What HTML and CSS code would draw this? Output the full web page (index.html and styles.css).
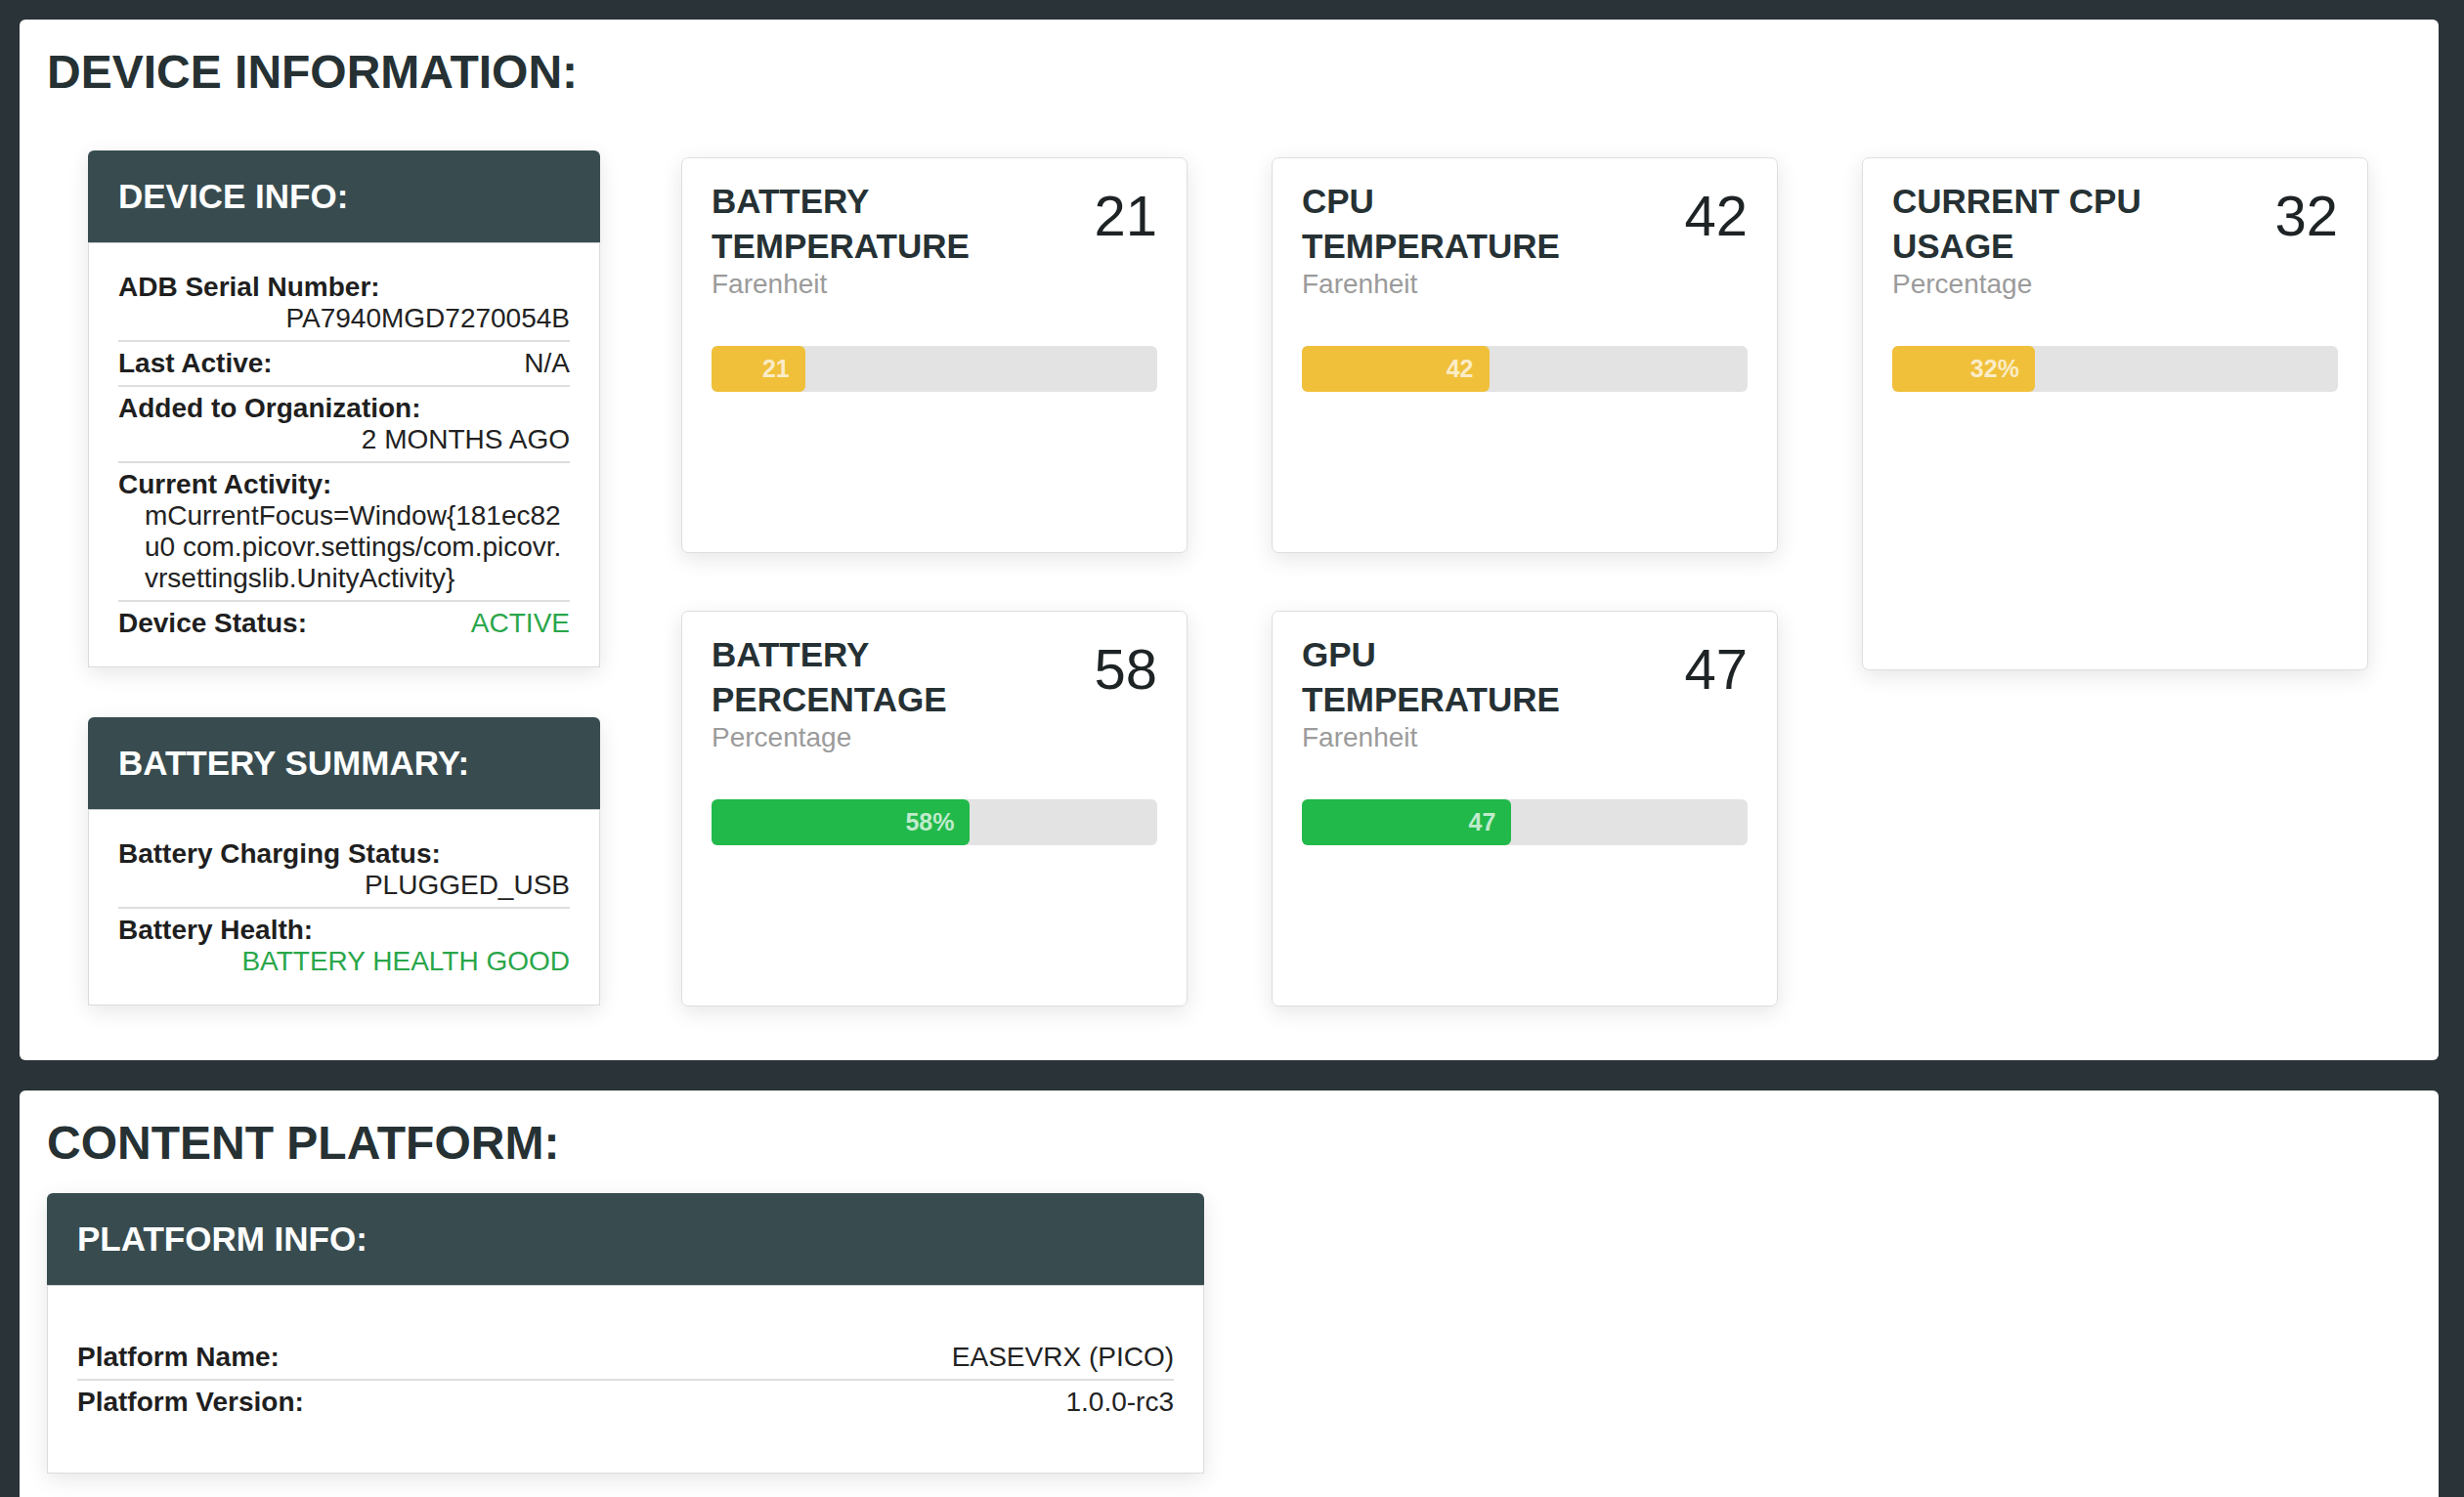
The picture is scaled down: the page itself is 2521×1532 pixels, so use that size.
FILE: index.html
```html
<!DOCTYPE html>
<html lang="en">
<head>
<meta charset="utf-8">
<title>Device Information</title>
<link rel="stylesheet" href="styles.css">
</head>
<body>
<section class="panel panel-device">
  <h1 class="panel-title">DEVICE INFORMATION:</h1>
  <div class="device-layout">
    <div class="side-col">
      <div class="info-card info-card-gap">
        <div class="info-head">DEVICE INFO:</div>
        <div class="info-body">
          <div class="row"><span class="lbl">ADB Serial Number:</span><span class="val">PA7940MGD7270054B</span></div>
          <div class="row"><span class="lbl">Last Active:</span><span class="val">N/A</span></div>
          <div class="row"><span class="lbl">Added to Organization:</span><span class="val">2 MONTHS AGO</span></div>
          <div class="row"><span class="lbl">Current Activity:</span><span class="val val-block">mCurrentFocus=Window{181ec82 u0 com.picovr.settings/com.picovr.vrsettingslib.UnityActivity}</span></div>
          <div class="row"><span class="lbl">Device Status:</span><span class="val ok">ACTIVE</span></div>
        </div>
      </div>
      <div class="info-card">
        <div class="info-head">BATTERY SUMMARY:</div>
        <div class="info-body">
          <div class="row"><span class="lbl">Battery Charging Status:</span><span class="val">PLUGGED_USB</span></div>
          <div class="row"><span class="lbl">Battery Health:</span><span class="val ok">BATTERY HEALTH GOOD</span></div>
        </div>
      </div>
    </div>
    <div class="metrics">
      <div class="metric">
        <div class="metric-top">
          <div class="metric-name">
            <div class="metric-title">BATTERY TEMPERATURE</div>
            <div class="metric-sub">Farenheit</div>
          </div>
          <div class="metric-value">21</div>
        </div>
        <div class="bar"><div class="fill fill-yellow" style="width:21%">21</div></div>
      </div>
      <div class="metric">
        <div class="metric-top">
          <div class="metric-name">
            <div class="metric-title">CPU TEMPERATURE</div>
            <div class="metric-sub">Farenheit</div>
          </div>
          <div class="metric-value">42</div>
        </div>
        <div class="bar"><div class="fill fill-yellow" style="width:42%">42</div></div>
      </div>
      <div class="metric metric-tall">
        <div class="metric-top">
          <div class="metric-name">
            <div class="metric-title">CURRENT CPU USAGE</div>
            <div class="metric-sub">Percentage</div>
          </div>
          <div class="metric-value">32</div>
        </div>
        <div class="bar"><div class="fill fill-yellow" style="width:32%">32%</div></div>
      </div>
      <div class="metric">
        <div class="metric-top">
          <div class="metric-name">
            <div class="metric-title">BATTERY PERCENTAGE</div>
            <div class="metric-sub">Percentage</div>
          </div>
          <div class="metric-value">58</div>
        </div>
        <div class="bar"><div class="fill fill-green" style="width:58%">58%</div></div>
      </div>
      <div class="metric">
        <div class="metric-top">
          <div class="metric-name">
            <div class="metric-title">GPU TEMPERATURE</div>
            <div class="metric-sub">Farenheit</div>
          </div>
          <div class="metric-value">47</div>
        </div>
        <div class="bar"><div class="fill fill-green" style="width:47%">47</div></div>
      </div>
    </div>
  </div>
</section>

<section class="panel panel-content">
  <h1 class="panel-title">CONTENT PLATFORM:</h1>
  <div class="info-card platform-card">
    <div class="info-head">PLATFORM INFO:</div>
    <div class="info-body platform-body">
      <div class="row"><span class="lbl">Platform Name:</span><span class="val">EASEVRX (PICO)</span></div>
      <div class="row"><span class="lbl">Platform Version:</span><span class="val">1.0.0-rc3</span></div>
    </div>
  </div>
</section>
</body>
</html>
```

FILE: styles.css
```css
* {
  box-sizing: border-box;
}

html, body {
  margin: 0;
}

body {
  background: #2a3337;
  padding: 20px 26px 0 20px;
  font-family: "Liberation Sans", Arial, Helvetica, sans-serif;
  color: #222;
}

.panel {
  background: #fff;
  border-radius: 6px;
  padding: 26px 28px 55px 28px;
}

.panel-device {
  margin-bottom: 31px;
}

.panel-title {
  margin: 0 0 53px 0;
  font-size: 48px;
  font-weight: 700;
  line-height: normal;
  color: #263134;
}

.panel-content .panel-title {
  margin-bottom: 24px;
}

/* ---------- device layout ---------- */
.device-layout {
  display: flex;
  align-items: flex-start;
  gap: 83px;
  padding-left: 42px;
}

.side-col {
  width: 524px;
  flex: 0 0 524px;
}

/* ---------- info cards ---------- */
.info-card {
  border-radius: 6px;
  box-shadow: 0 6px 22px rgba(0, 0, 0, 0.10);
  background: #fff;
}

.info-card-gap {
  margin-bottom: 51px;
}

.info-head {
  background: #384c50;
  color: #fff;
  font-size: 35px;
  font-weight: 700;
  line-height: normal;
  padding: 27px 31px;
  border-radius: 6px 6px 0 0;
}

.info-body {
  border: 1px solid #dcdcdc;
  border-top: 1px solid #d0d0d0;
  padding: 23px 30px 22px 30px;
  font-size: 28px;
  line-height: normal;
}

.row {
  display: flex;
  flex-wrap: wrap;
  padding: 6px 0;
}

.row + .row {
  border-top: 2px solid #dedede;
}

.lbl {
  font-weight: 700;
  color: #1f1f1f;
}

.val {
  margin-left: auto;
  text-align: right;
  color: #222;
}

.val-block {
  flex: 0 0 100%;
  margin-left: 0;
  padding-left: 27px;
  text-align: left;
  word-break: break-all;
  min-width: 0;
}

.ok {
  color: #2aa64a;
}

/* ---------- metric cards ---------- */
.metrics {
  display: grid;
  grid-template-columns: repeat(3, 518px);
  grid-auto-rows: 405px;
  column-gap: 86px;
  row-gap: 59px;
  margin-top: 7px;
}

.metric {
  height: 405px;
  background: #fff;
  border: 1px solid #dedede;
  border-radius: 7px;
  box-shadow: 0 6px 22px rgba(0, 0, 0, 0.10);
  padding: 21px 30px;
}

.metric-tall {
  grid-row: span 2;
  align-self: start;
  height: 525px;
}

.metric-top {
  display: flex;
  justify-content: space-between;
  align-items: flex-start;
}

.metric-name {
  width: 66%;
}

.metric-title {
  font-size: 35px;
  font-weight: 700;
  line-height: 45.5px;
  color: #263134;
}

.metric-sub {
  font-size: 28px;
  line-height: normal;
  color: #9b9b9b;
  margin-top: 1px;
}

.metric-value {
  margin-top: 4px;
  font-size: 58px;
  line-height: normal;
  font-weight: 400;
  color: #1e2325;
  text-align: right;
}

.bar {
  margin-top: 47px;
  height: 47px;
  background: #e3e3e3;
  border-radius: 6px;
  display: flex;
}

.fill {
  height: 47px;
  border-radius: 6px;
  font-size: 25px;
  font-weight: 700;
  line-height: 47px;
  color: rgba(255, 255, 255, 0.72);
  text-align: right;
  padding-right: 16px;
}

.fill-yellow {
  background: #f0c03a;
}

.fill-green {
  background: #21b94a;
}

/* ---------- platform ---------- */
.platform-card {
  width: 1184px;
}

.platform-body {
  padding: 51px 30px 50px 30px;
}
```
